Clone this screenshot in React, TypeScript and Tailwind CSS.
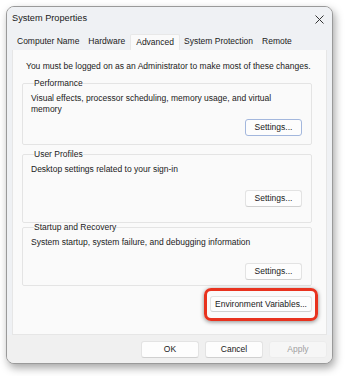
import React from "react";

const font = { fontFamily: '"Liberation Sans", Arial, sans-serif' };

function Btn({ children, focus, disabled, w = "w-[57px]", h = "h-[17px]" }: { children: React.ReactNode; focus?: boolean; disabled?: boolean; w?: string; h?: string }) {
  return (
    <div
      className={`${w} ${h} flex items-center justify-center rounded-[3px] border text-[8.5px] ${
        focus
          ? "border-[#a3b7dd] bg-[#fdfdfd]"
          : disabled
          ? "border-[#ececec] bg-[#f6f6f6]"
          : "border-[#e3e3e3] border-b-[#d0d0d0] bg-[#fdfdfd]"
      } ${disabled ? "text-[#a0a0a0]" : "text-[#1a1a1a]"}`}
    >
      {children}
    </div>
  );
}

function Group({ title, text, focus, h }: { title: string; text: React.ReactNode; focus?: boolean; h: string }) {
  return (
    <fieldset className={`${h} border border-[#e4e4e4] rounded-[2px] pl-[8px] pr-[9px] pt-[6px] bg-[#fafafa]`}>
      <legend className="ml-[3px] px-0 text-[8.5px] text-[#1a1a1a] leading-[8px]">{title}</legend>
      <div className="text-[8.5px] leading-[10.5px] text-[#1a1a1a] h-[26px]">{text}</div>
      <div className="flex justify-end">
        <Btn focus={focus}>Settings...</Btn>
      </div>
    </fieldset>
  );
}

export default function App() {
  return (
    <div className="w-[345px] h-[376px] bg-white pt-[6px] pl-[6px]" style={font}>
      <div className="w-[327px] h-[358px] rounded-[8px] border border-[#9a9a9a] bg-[#f0f0f0] shadow-[2px_4px_8px_rgba(0,0,0,0.35)] flex flex-col overflow-hidden">
        <div className="h-[24px] flex items-center justify-between pl-[5px] pr-[8px] bg-[#eff1f4]">
          <span className="text-[9.2px] text-[#1a1a1a]">System Properties</span>
          <svg width="9" height="9" viewBox="0 0 9 9">
            <path d="M0.5 0.5 L8.5 8.5 M8.5 0.5 L0.5 8.5" stroke="#333" strokeWidth="1" />
          </svg>
        </div>
        <div className="bg-[#eff1f4] flex items-end pl-[6px] h-[19px] text-[8.5px] text-[#1a1a1a]">
          <div className="h-[17px] pl-[4px] pr-[4px] flex items-center">Computer Name</div>
          <div className="h-[17px] px-[5px] flex items-center">Hardware</div>
          <div className="h-[16px] px-[5px] flex items-start pt-[1px] bg-[#fafafa] border-x border-t border-[#e8e8e8] rounded-t-[2px]">Advanced</div>
          <div className="h-[17px] px-[4px] flex items-center">System Protection</div>
          <div className="h-[17px] px-[5px] flex items-center">Remote</div>
        </div>
        <div className="bg-[#eff1f4] px-[5px]">
          <div className="h-[285px] bg-[#fafafa] border-x border-b border-[#e6e6e6] pl-[9px] pr-[14px] pt-[11px]">
            <div className="text-[8.5px] text-[#1a1a1a] pl-[4px] leading-[11px] whitespace-nowrap">
              You must be logged on as an Administrator to make most of these changes.
            </div>
            <div className="mt-[7px] flex flex-col">
              <Group
                title="Performance"
                focus
                h="h-[66px]"
                text={
                  <>
                    Visual effects, processor scheduling, memory usage, and virtual
                    <br />
                    memory
                  </>
                }
              />
              <div className="mt-[5px]">
                <Group h="h-[73px]" title="User Profiles" text="Desktop settings related to your sign-in" />
              </div>
              <Group h="h-[63px]" title="Startup and Recovery" text="System startup, system failure, and debugging information" />
            </div>
            <div className="flex justify-end mt-[10px]">
              <div className="relative">
                <Btn w="w-[102px]" h="h-[16px]">Environment Variables...</Btn>
                <div className="absolute -left-[6px] -right-[6px] -top-[8px] -bottom-[9px] rounded-[7px] border-[3.5px] border-[#e8321e] shadow-[0_1px_4px_rgba(0,0,0,0.45)]" />
              </div>
            </div>
          </div>
        </div>
        <div className="flex-1 bg-[#f0f0f0] flex items-center justify-end gap-[6px] pr-[5px]">
          <Btn w="w-[58px]">OK</Btn>
          <Btn w="w-[58px]">Cancel</Btn>
          <Btn w="w-[58px]" disabled>Apply</Btn>
        </div>
      </div>
    </div>
  );
}
